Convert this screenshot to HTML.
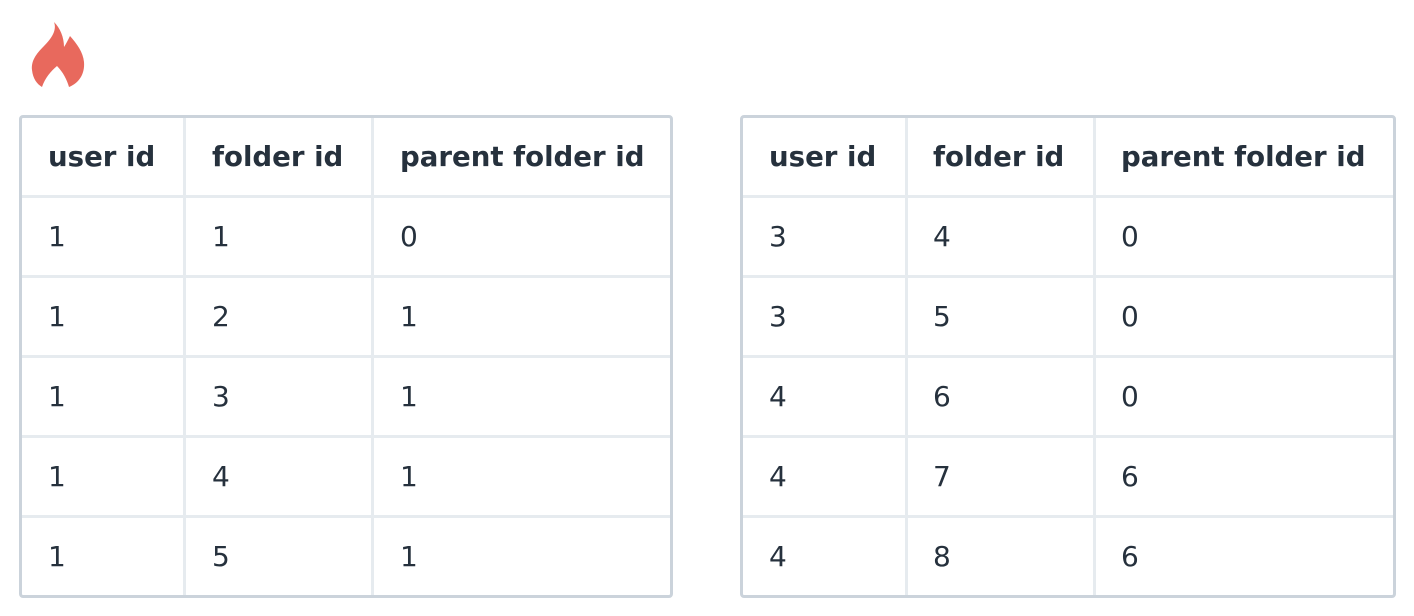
<!DOCTYPE html>
<html><head><meta charset="utf-8"><style>
body{margin:0;width:1414px;height:616px;background:#fff;position:relative;overflow:hidden;font-family:"DejaVu Sans","Liberation Sans",sans-serif;color:#26313d}
.t{position:absolute;top:115px;height:477px;border:3px solid #cbd3db;border-radius:4px;box-sizing:content-box}
.h{position:absolute;left:0;right:0;height:3px;background:#e6ebef}
.v{position:absolute;top:0;bottom:0;width:3px;background:#e6ebef}
.c{position:absolute;font-size:28px;line-height:40px}
.b{font-weight:bold;font-size:27.6px;top:19px!important}
</style></head><body>
<svg style="position:absolute;left:0;top:0" width="100" height="100" viewBox="0 0 100 100">
<path d="M54 22 C57 30 52 38 44 46 C36 54 31 61 32 70 C33 79 37 84 42 87 C45 78 51 71 57 66 C63 72 67 80 69 87 C79 83 85 74 84 62 C83 52 77 44 70 36 C68 40 66 44 64 47 C64 37 60 28 54 22 Z" fill="#e8695d"/>
</svg>
<div class="t" style="left:19px;width:648px">
<div class="h" style="top:77px"></div><div class="h" style="top:157px"></div><div class="h" style="top:237px"></div><div class="h" style="top:317px"></div><div class="h" style="top:397px"></div>
<div class="v" style="left:161px"></div><div class="v" style="left:349px"></div>
<div class="c b" style="left:26px;top:19px">user id</div><div class="c b" style="left:190px;top:19px">folder id</div><div class="c b" style="left:378px;top:19px">parent folder id</div>
<div class="c" style="left:26px;top:99px">1</div><div class="c" style="left:190px;top:99px">1</div><div class="c" style="left:378px;top:99px">0</div>
<div class="c" style="left:26px;top:179px">1</div><div class="c" style="left:190px;top:179px">2</div><div class="c" style="left:378px;top:179px">1</div>
<div class="c" style="left:26px;top:259px">1</div><div class="c" style="left:190px;top:259px">3</div><div class="c" style="left:378px;top:259px">1</div>
<div class="c" style="left:26px;top:339px">1</div><div class="c" style="left:190px;top:339px">4</div><div class="c" style="left:378px;top:339px">1</div>
<div class="c" style="left:26px;top:419px">1</div><div class="c" style="left:190px;top:419px">5</div><div class="c" style="left:378px;top:419px">1</div>
</div>
<div class="t" style="left:740px;width:650px">
<div class="h" style="top:77px"></div><div class="h" style="top:157px"></div><div class="h" style="top:237px"></div><div class="h" style="top:317px"></div><div class="h" style="top:397px"></div>
<div class="v" style="left:162px"></div><div class="v" style="left:350px"></div>
<div class="c b" style="left:26px;top:19px">user id</div><div class="c b" style="left:190px;top:19px">folder id</div><div class="c b" style="left:378px;top:19px">parent folder id</div>
<div class="c" style="left:26px;top:99px">3</div><div class="c" style="left:190px;top:99px">4</div><div class="c" style="left:378px;top:99px">0</div>
<div class="c" style="left:26px;top:179px">3</div><div class="c" style="left:190px;top:179px">5</div><div class="c" style="left:378px;top:179px">0</div>
<div class="c" style="left:26px;top:259px">4</div><div class="c" style="left:190px;top:259px">6</div><div class="c" style="left:378px;top:259px">0</div>
<div class="c" style="left:26px;top:339px">4</div><div class="c" style="left:190px;top:339px">7</div><div class="c" style="left:378px;top:339px">6</div>
<div class="c" style="left:26px;top:419px">4</div><div class="c" style="left:190px;top:419px">8</div><div class="c" style="left:378px;top:419px">6</div>
</div>
</body></html>
